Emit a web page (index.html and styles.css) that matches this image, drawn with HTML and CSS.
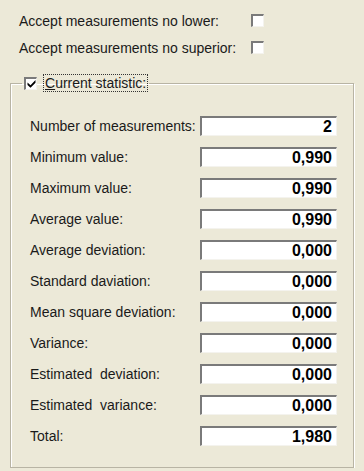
FILE: index.html
```html
<!DOCTYPE html>
<html lang="en">
<head>
  <meta charset="UTF-8">
  <meta name="viewport" content="width=device-width, initial-scale=1">
  <title>Statistics</title>
  <link rel="stylesheet" href="styles.css">
</head>
<body>

  <div class="options">
    <div class="option-row">
      <span class="label">Accept measurements no lower:</span>
      <span class="check"></span>
    </div>
    <div class="option-row">
      <span class="label">Accept measurements no superior:</span>
      <span class="check"></span>
    </div>
  </div>

  <fieldset class="group">
    <legend class="group-title">
      <span class="check checked">
        <svg viewBox="0 0 9 9" width="9" height="9"><path d="M0.5 3.5 L3.5 6.2 L8.5 1 L8.5 3.8 L3.5 8.8 L0.5 6 Z" fill="#000"/></svg>
      </span>
      <span class="focus"><u>C</u>urrent statistic:</span>
    </legend>

    <div class="stats">
      <span class="label">Number of measurements:</span>
      <span class="field">2</span>

      <span class="label">Minimum value:</span>
      <span class="field">0,990</span>

      <span class="label">Maximum value:</span>
      <span class="field">0,990</span>

      <span class="label">Average value:</span>
      <span class="field">0,990</span>

      <span class="label">Average deviation:</span>
      <span class="field">0,000</span>

      <span class="label">Standard daviation:</span>
      <span class="field">0,000</span>

      <span class="label">Mean square deviation:</span>
      <span class="field">0,000</span>

      <span class="label">Variance:</span>
      <span class="field">0,000</span>

      <span class="label">Estimated&nbsp; deviation:</span>
      <span class="field">0,000</span>

      <span class="label">Estimated&nbsp; variance:</span>
      <span class="field">0,000</span>

      <span class="label">Total:</span>
      <span class="field">1,980</span>
    </div>
  </fieldset>

</body>
</html>
```

FILE: styles.css
```css
body {
  font-family: "Liberation Sans", Arial, sans-serif;
  font-size: 14px;
  color: #1a1a1a;
  background-color: #ece9d8;
  margin: 0;
  padding: 0;
}

.options {
  padding: 7px 0 0 19px;
}

.option-row {
  display: grid;
  grid-template-columns: 232px 13px;
  align-items: center;
  height: 27px;
}

.check {
  display: inline-flex;
  align-items: center;
  justify-content: center;
  box-sizing: border-box;
  width: 13px;
  height: 13px;
  background: #fff;
  border-style: solid;
  border-width: 2px 1px 1px 2px;
  border-color: #7a7a7a #f4f3ee #f4f3ee #7a7a7a;
}

.group {
  margin: 13px 10px 0 10px;
  padding: 0 0 21px 19px;
  border: 1px solid #b8b4a4;
  box-shadow: inset 1px 1px #fff, 1px 1px #fff;
  min-width: 0;
}

.group-title {
  display: flex;
  align-items: center;
  gap: 7px;
  margin-left: -8px;
  padding: 0 2px;
  height: 18px;
}

.focus {
  outline: 1px dotted #333;
  outline-offset: 0;
  padding: 0 1px;
  line-height: 16px;
}

.stats {
  display: grid;
  grid-template-columns: 170px 137px;
  row-gap: 11px;
  align-items: center;
  padding-top: 24px;
}

.field {
  box-sizing: border-box;
  height: 20px;
  background: #fff;
  border-style: solid;
  border-width: 2px 1px 1px 2px;
  border-color: #7a7a7a #f4f3ee #f4f3ee #7a7a7a;
  text-align: right;
  padding-right: 4px;
  font-size: 16px;
  font-weight: bold;
  line-height: 17px;
  color: #000;
}
```
